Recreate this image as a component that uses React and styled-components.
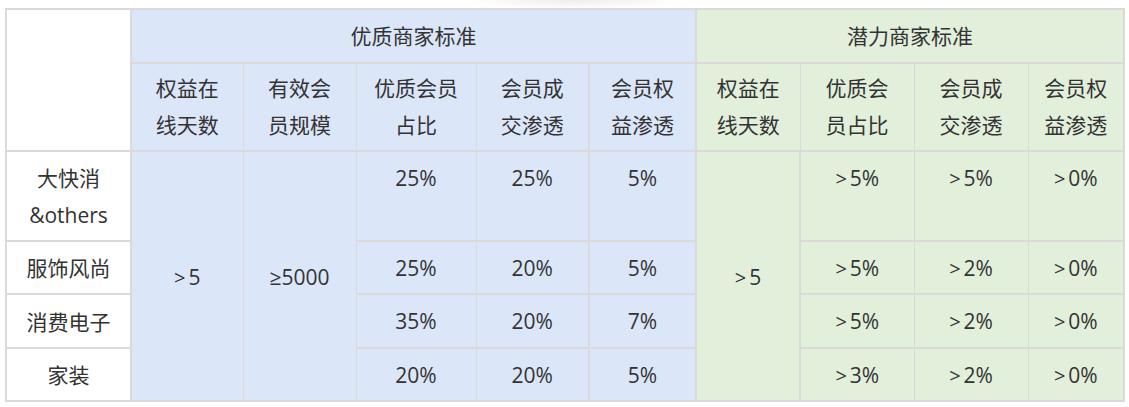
import React from 'react'
import styled, { createGlobalStyle } from 'styled-components'

const GlobalStyle = createGlobalStyle`
  html, body {
    margin: 0;
    padding: 0;
    background: #ffffff;
  }
  body {
    font-family: "Open Sans", "Noto Sans CJK SC", sans-serif;
    color: #333333;
  }
`

const Page = styled.div`
  padding: 8px 0 0 5px;
  background: radial-gradient(ellipse 110px 9px at 575px 0, rgba(0, 0, 0, 0.07), rgba(0, 0, 0, 0)) no-repeat;
`

const Table = styled.table`
  width: 1118px;
  table-layout: fixed;
  border-collapse: collapse;
  border: 2px solid #dadada;
  font-size: 21px;
  line-height: 37px;
  color: #333333;
`

const palette = {
  blue: '#dce6f9',
  green: '#e2efdb',
  white: '#ffffff',
}

const Cell = styled.td`
  background: ${p => palette[p.$tone || 'white']};
  text-align: center;
  vertical-align: ${p => (p.$middle ? 'middle' : 'top')};
  padding: ${p => p.$pad || '8px 4px 6px'};
  border-top: 2px solid #dadada;
  border-bottom: 2px solid #dadada;
  border-left: ${p => (p.$edge ? 2 : 1)}px solid #dadada;
  border-right: ${p => (p.$edge ? 2 : 1)}px solid #dadada;
  white-space: nowrap;
  font-weight: 400;
  box-sizing: border-box;
`

const Gt = styled.span`
  font-size: 20px;
  line-height: 1;
  margin-right: 3px;
`

const Row = styled.tr`
  height: ${p => p.$h}px;
`

const widths = [125, 112, 113, 120, 113, 107, 104, 114, 114, 96]

const blueHeads = [
  ['权益在', '线天数'],
  ['有效会', '员规模'],
  ['优质会员', '占比'],
  ['会员成', '交渗透'],
  ['会员权', '益渗透'],
]

const greenHeads = [
  ['权益在', '线天数'],
  ['优质会', '员占比'],
  ['会员成', '交渗透'],
  ['会员权', '益渗透'],
]

const rows = [
  { label: ['大快消', '&others'], h: 90, blue: ['25%', '25%', '5%'], green: ['5%', '5%', '0%'] },
  { label: ['服饰风尚'], h: 53, blue: ['25%', '20%', '5%'], green: ['5%', '2%', '0%'] },
  { label: ['消费电子'], h: 54, blue: ['35%', '20%', '7%'], green: ['5%', '2%', '0%'] },
  { label: ['家装'], h: 53, blue: ['20%', '20%', '5%'], green: ['3%', '2%', '0%'] },
]

function Lines({ lines }) {
  return lines.map((t, i) => (
    <React.Fragment key={i}>
      {i > 0 && <br />}
      {t}
    </React.Fragment>
  ))
}

function Above({ value }) {
  return (
    <>
      <Gt>&gt;</Gt>
      {value}
    </>
  )
}

function StandardTable() {
  return (
    <Table>
      <colgroup>
        {widths.map((w, i) => (
          <col key={i} style={{ width: w }} />
        ))}
      </colgroup>
      <thead>
        <Row $h={54}>
          <Cell as="th" rowSpan={2} $edge />
          <Cell as="th" colSpan={5} $tone="blue" $pad="8px 4px 7px" $middle $edge>
            优质商家标准
          </Cell>
          <Cell as="th" colSpan={4} $tone="green" $pad="8px 4px 7px" $middle $edge>
            潜力商家标准
          </Cell>
        </Row>
        <Row $h={88}>
          {blueHeads.map((l, i) => (
            <Cell as="th" key={'b' + i} $tone="blue" $pad="6px 4px" $middle $edge={i === 4}>
              <Lines lines={l} />
            </Cell>
          ))}
          {greenHeads.map((l, i) => (
            <Cell as="th" key={'g' + i} $tone="green" $pad="6px 4px" $middle>
              <Lines lines={l} />
            </Cell>
          ))}
        </Row>
      </thead>
      <tbody>
        {rows.map((r, ri) => (
          <Row key={ri} $h={r.h}>
            <Cell $edge $middle={r.label.length === 1}>
              <Lines lines={r.label} />
            </Cell>
            {ri === 0 && (
              <>
                <Cell rowSpan={4} $tone="blue" $middle><Above value="5" /></Cell>
                <Cell rowSpan={4} $tone="blue" $middle>≥5000</Cell>
              </>
            )}
            {r.blue.map((v, i) => (
              <Cell key={'b' + i} $tone="blue" $edge={i === 2}>{v}</Cell>
            ))}
            {ri === 0 && (
              <Cell rowSpan={4} $tone="green" $middle $edge><Above value="5" /></Cell>
            )}
            {r.green.map((v, i) => (
              <Cell key={'g' + i} $tone="green"><Above value={v} /></Cell>
            ))}
          </Row>
        ))}
      </tbody>
    </Table>
  )
}

export default function App() {
  return (
    <Page>
      <GlobalStyle />
      <StandardTable />
    </Page>
  )
}
